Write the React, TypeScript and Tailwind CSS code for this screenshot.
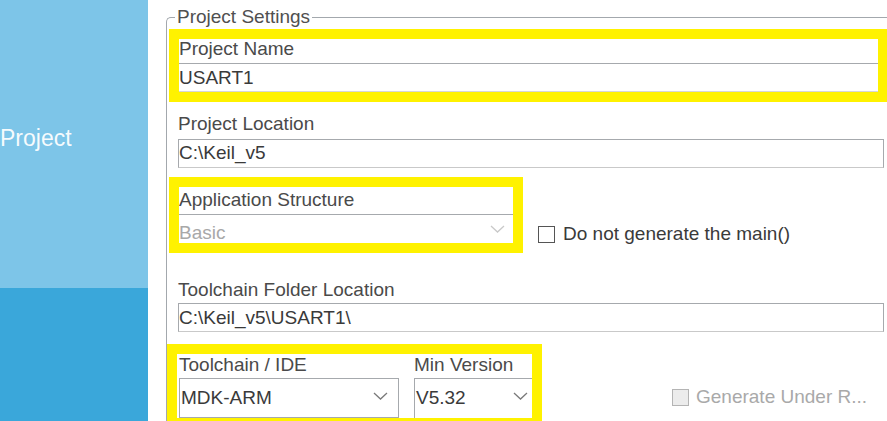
import React from "react";

const font = "font-['Liberation_Sans','Arial',sans-serif]";

function Chevron({ light = false }: { light?: boolean }) {
  return (
    <svg width="15" height="8" viewBox="0 0 15 8" className="shrink-0">
      <polyline
        points="1,1 7.5,7 14,1"
        fill="none"
        stroke={light ? "#c9c9c9" : "#7a7a7a"}
        strokeWidth="1.3"
      />
    </svg>
  );
}

function Label({ children, className = "" }: { children: React.ReactNode; className?: string }) {
  return <div className={`text-[19px] leading-[20px] text-[#4a4a4a] whitespace-nowrap ${className}`}>{children}</div>;
}

export default function App() {
  return (
    <div className={`flex h-[421px] w-[887px] overflow-hidden bg-white ${font}`}>
      {/* Sidebar */}
      <aside className="flex w-[148px] shrink-0 flex-col">
        <div className="h-[288px] bg-[#7dc5e8] pt-[125px]">
          <span className="block text-[23px] leading-[26px] text-white/95">Project</span>
        </div>
        <div className="flex-1 bg-[#3aa7da]" />
      </aside>

      {/* Settings */}
      <div className="min-w-0 flex-1 pl-[18px] pt-[6px]">
        <fieldset className="h-[500px] rounded-tl-[5px] border-l border-t border-[#a3a8ad]">
          <legend className="ml-[8px] px-[2px] text-[19px] leading-[22px] text-[#505050]">Project Settings</legend>

          {/* Project Name */}
          <div className="ml-[2px] mt-[1px] border-b-[10px] border-l-[10px] border-r-[9px] border-t-[10px] border-[#fff200] bg-white">
            <Label className="h-[24px]">Project Name</Label>
            <div className="h-[29px] border-b border-t border-b-[#d6d6d6] border-t-[#a6a9ad] pt-[4px] text-[19px] leading-[20px] text-[#3a3a3a]">
              USART1
            </div>
          </div>

          {/* Project Location */}
          <div className="ml-[11px] mr-[3px] mt-[12px]">
            <Label className="h-[25px]">Project Location</Label>
            <div className="h-[29px] border border-[#a6a9ad] border-b-[#c9c9c9] pt-[3px] text-[19px] leading-[20px] text-[#3a3a3a]">
              C:\Keil_v5
            </div>
          </div>

          {/* Application Structure */}
          <div className="mt-[9px] flex items-start">
            <div className="ml-[2px] w-[354px] border-[10px] border-[#fff200] bg-white">
              <Label className="h-[27px] pt-[3px]">Application Structure</Label>
              <div className="flex h-[29px] items-center justify-between border-t border-[#a6a9ad] pr-[8px]">
                <span className="self-start pt-[8px] text-[19px] leading-[20px] text-[#a8a8a8]">Basic</span>
                <Chevron light />
              </div>
            </div>
            <label className="ml-[15px] mt-[46px] flex items-center gap-[8px]">
              <span className="h-[17px] w-[17px] border border-[#555] bg-white" />
              <span className="text-[19px] leading-[22px] text-[#3a3a3a]">Do not generate the main()</span>
            </label>
          </div>

          {/* Toolchain Folder Location */}
          <div className="ml-[11px] mr-[3px] mt-[25px]">
            <Label className="h-[25px] pt-[2px]">Toolchain Folder Location</Label>
            <div className="h-[29px] border border-[#a6a9ad] border-b-[#c9c9c9] pt-[4px] text-[19px] leading-[20px] text-[#3a3a3a]">
              C:\Keil_v5\USART1\
            </div>
          </div>

          {/* Toolchain / Min Version */}
          <div className="mt-[12px] flex items-start">
            <div className="flex w-[375px] gap-[15px] border-[10px] border-[#fff200] bg-white pl-[2px]">
              <div className="w-[220px]">
                <Label className="h-[24px] pt-[1px]">Toolchain / IDE</Label>
                <div className="flex h-[40px] items-start justify-between border border-[#a6a9ad] pr-[10px]">
                  <span className="pl-[1px] pt-[9px] text-[19px] leading-[20px] text-[#3a3a3a]">MDK-ARM</span>
                  <span className="pt-[13px]">
                    <Chevron />
                  </span>
                </div>
              </div>
              <div className="min-w-0 flex-1">
                <Label className="h-[24px] pt-[1px]">Min Version</Label>
                <div className="flex h-[40px] items-start justify-between border-l border-t border-[#a6a9ad] pr-[4px]">
                  <span className="pl-[1px] pt-[9px] text-[19px] leading-[20px] text-[#3a3a3a]">V5.32</span>
                  <span className="pt-[13px]">
                    <Chevron />
                  </span>
                </div>
              </div>
            </div>
            <label className="ml-[130px] mt-[42px] flex items-center gap-[7px]">
              <span className="h-[17px] w-[17px] border border-[#b4b4b4] bg-[#ececec]" />
              <span className="whitespace-nowrap text-[19px] leading-[22px] text-[#a9a9a9]">Generate Under R...</span>
            </label>
          </div>
        </fieldset>
      </div>
    </div>
  );
}
